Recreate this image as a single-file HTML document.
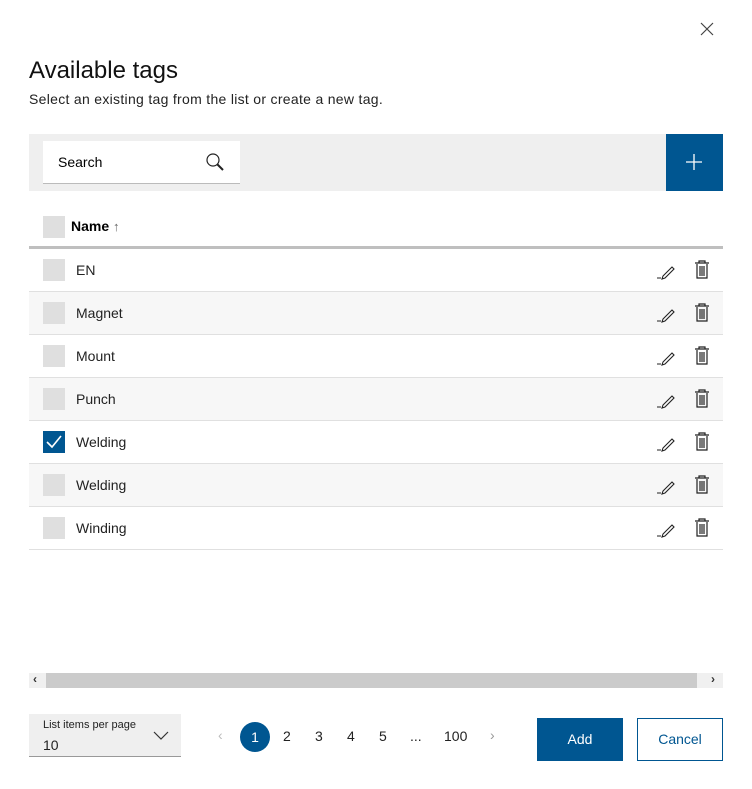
<!DOCTYPE html>
<html><head><meta charset="utf-8"><style>
*{box-sizing:border-box;margin:0;padding:0}
body{width:752px;height:789px;background:#fff;font-family:"Liberation Sans",sans-serif;color:#000;position:relative;overflow:hidden}
.abs{position:absolute}
h1{position:absolute;left:29px;top:57px;font-size:24px;font-weight:normal;color:#111}
.sub{left:29px;top:91px;font-size:14px;color:#222;letter-spacing:0.3px}
.tb{left:29px;top:134px;width:694px;height:57px;background:#efefef}
.search{left:43px;top:141px;width:197px;height:43px;background:#fff;border-bottom:1px solid #bbb;font-size:14px;padding:13px 0 0 15px}
.plus{left:666px;top:134px;width:57px;height:57px;background:#005691}
.cb{position:absolute;left:43px;width:22px;height:22px;background:#dfdfdf}
.row{position:absolute;left:29px;width:694px;height:43px;border-bottom:1px solid #e0e0e0}
.row span{position:absolute;left:47px;top:13px;font-size:14px;color:#222}
.row .cb{left:14px;top:10px}
.alt{background:#f7f7f7}
.ic{position:absolute;top:11px}
</style></head><body>
<svg class="abs" style="left:700px;top:22px" width="14" height="14"><path d="M1 1L13 13M13 1L1 13" stroke="#444" stroke-width="1.2"/></svg>
<h1>Available tags</h1>
<div class="abs sub">Select an existing tag from the list or create a new tag.</div>
<div class="abs tb"></div>
<div class="abs search">Search</div>
<svg class="abs" style="left:205px;top:152px" width="20" height="20"><circle cx="8" cy="8" r="6" fill="none" stroke="#222" stroke-width="1.2"/><path d="M12 12L18 18" stroke="#222" stroke-width="2"/></svg>
<div class="abs plus"></div>
<svg class="abs" style="left:685px;top:153px" width="18" height="18"><path d="M9 1V17M1 9H17" stroke="#fff" stroke-width="1.3"/></svg>
<div class="cb" style="top:216px"></div>
<div class="abs" style="left:71px;top:218px;font-size:14px;font-weight:bold">Name <span style="font-weight:normal;color:#666;font-size:13px">↑</span></div>
<div class="abs" style="left:29px;top:246px;width:694px;height:3px;background:#bfbfbf"></div>

<div class="row" style="top:249px"><div class="cb"></div><span>EN</span></div>
<div class="row alt" style="top:292px"><div class="cb"></div><span>Magnet</span></div>
<div class="row" style="top:335px"><div class="cb"></div><span>Mount</span></div>
<div class="row alt" style="top:378px"><div class="cb"></div><span>Punch</span></div>
<div class="row" style="top:421px"><div class="cb" style="background:#005691"><svg width="22" height="22"><path d="M4 11L9 16L18 5" fill="none" stroke="#fff" stroke-width="1.6"/></svg></div><span>Welding</span></div>
<div class="row alt" style="top:464px"><div class="cb"></div><span>Welding</span></div>
<div class="row" style="top:507px"><div class="cb"></div><span>Winding</span></div>

<div id="icons"></div>
<script>
var h='';[249,292,335,378,421,464,507].forEach(function(t){
h+='<svg class="abs" style="left:654px;top:'+(t+12)+'px" width="22" height="20"><path d="M3 17H7M9 15L18 6L20 8L11 17L8 18Z" fill="none" stroke="#222" stroke-width="1.1"/></svg>';
h+='<svg class="abs" style="left:693px;top:'+(t+10)+'px" width="18" height="22"><path d="M2 4H16M6 4V2H12V4M4 5V19H14V5M7 7V17M9 7V17M11 7V17" fill="none" stroke="#222" stroke-width="1.2"/></svg>';});
document.getElementById('icons').innerHTML=h;
</script>

<div class="abs" style="left:29px;top:673px;width:694px;height:15px;background:#f0f0f0"></div>
<div class="abs" style="left:46px;top:673px;width:651px;height:15px;background:#cbcbcb"></div>
<div class="abs" style="left:33px;top:672px;font-size:12px;font-weight:bold;color:#333">‹</div>
<div class="abs" style="left:711px;top:672px;font-size:12px;font-weight:bold;color:#333">›</div>

<div class="abs" style="left:29px;top:714px;width:152px;height:43px;background:#efefef;border-bottom:1px solid #999"></div>
<div class="abs" style="left:43px;top:719px;font-size:11px;color:#222">List items per page</div>
<div class="abs" style="left:43px;top:737px;font-size:14px;color:#222">10</div>
<svg class="abs" style="left:153px;top:731px" width="16" height="10"><path d="M1 1L8 8L15 1" fill="none" stroke="#333" stroke-width="1.2"/></svg>

<div class="abs" style="left:218px;top:727px;font-size:14px;color:#bbb">‹</div>
<div class="abs" style="left:240px;top:722px;width:30px;height:30px;border-radius:50%;background:#005691;color:#fff;font-size:14px;text-align:center;line-height:30px">1</div>
<div class="abs" style="left:283px;top:728px;font-size:14px;color:#222">2</div>
<div class="abs" style="left:315px;top:728px;font-size:14px;color:#222">3</div>
<div class="abs" style="left:347px;top:728px;font-size:14px;color:#222">4</div>
<div class="abs" style="left:379px;top:728px;font-size:14px;color:#222">5</div>
<div class="abs" style="left:410px;top:728px;font-size:14px;color:#222">...</div>
<div class="abs" style="left:444px;top:728px;font-size:14px;color:#222">100</div>
<div class="abs" style="left:490px;top:727px;font-size:14px;color:#999">›</div>

<div class="abs" style="left:537px;top:718px;width:86px;height:43px;background:#005691;color:#fff;font-size:14px;text-align:center;line-height:43px">Add</div>
<div class="abs" style="left:637px;top:718px;width:86px;height:43px;border:1px solid #005691;color:#005691;font-size:14px;text-align:center;line-height:41px">Cancel</div>
</body></html>
